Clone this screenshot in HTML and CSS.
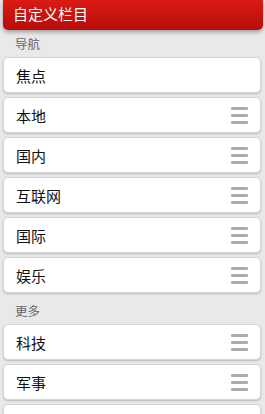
FILE: index.html
```html
<!DOCTYPE html>
<html lang="zh-CN">
<head>
  <meta charset="UTF-8" />
  <meta name="viewport" content="width=device-width, initial-scale=1.0" />
  <title>自定义栏目</title>
  <link rel="stylesheet" href="styles.css">
</head>
<body>
  <div class="header">自定义栏目</div>

  <div class="section-title">导航</div>
  <div class="item">焦点</div>
  <div class="item">本地<span class="handle"><i></i><i></i><i></i></span></div>
  <div class="item">国内<span class="handle"><i></i><i></i><i></i></span></div>
  <div class="item">互联网<span class="handle"><i></i><i></i><i></i></span></div>
  <div class="item">国际<span class="handle"><i></i><i></i><i></i></span></div>
  <div class="item">娱乐<span class="handle"><i></i><i></i><i></i></span></div>

  <div class="section-title">更多</div>
  <div class="item">科技<span class="handle"><i></i><i></i><i></i></span></div>
  <div class="item">军事<span class="handle"><i></i><i></i><i></i></span></div>
  <div class="item"><span></span><span class="handle"><i></i><i></i><i></i></span></div>
</body>
</html>
```

FILE: styles.css
```css
body { margin: 0; padding: 0 3px 0 3px; background: #e9e9e9; font-family: "Noto Sans CJK SC", "Noto Sans", sans-serif; overflow: hidden; }
.header { height: 30px; line-height: 28px; padding-left: 10px; color: #fff; font-size: 15px; background: linear-gradient(#d91c14, #b70b0a); border-radius: 0 0 5px 5px; box-shadow: 0 2px 4px rgba(0,0,0,0.35); margin-right: -1px; }
.section-title { height: 27px; line-height: 27px; padding-left: 12px; font-size: 12.5px; color: #666; }
.item { display: flex; align-items: center; justify-content: space-between; height: 34px; margin: 0 1px 4px 0; padding: 0 12px 0 12px; background: #fff; border: 1px solid #d6d6d6; border-radius: 5px; box-shadow: 0 1px 2px rgba(0,0,0,0.2); font-size: 15px; color: #111; }
.handle { display: flex; flex-direction: column; gap: 4px; width: 17px; }
.handle i { display: block; height: 3px; background: #acacac; border-radius: 1px; }
```
